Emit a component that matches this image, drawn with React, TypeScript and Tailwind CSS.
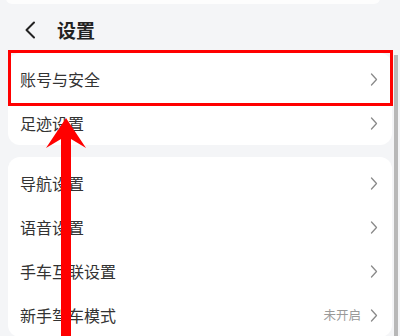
import React from "react";

function Chevron() {
  return (
    <svg width="8" height="13" viewBox="0 0 8 13" className="shrink-0">
      <path d="M1.5 1 L6.5 6.5 L1.5 12" fill="none" stroke="#8a8a8a" strokeWidth="1.3" strokeLinecap="round" strokeLinejoin="round" />
    </svg>
  );
}

function Row({ label, value }: { label: string; value?: string }) {
  return (
    <div className="h-[44px] flex items-center justify-between pl-[12px] pr-[14px]">
      <span className="text-[16px] text-[#333333] leading-none">{label}</span>
      <div className="flex items-center gap-[9px]">
        {value && <span className="text-[12.5px] text-[#9a9a9a] leading-none">{value}</span>}
        <Chevron />
      </div>
    </div>
  );
}

export default function App() {
  return (
    <div
      className="relative w-[400px] h-[336px] overflow-hidden bg-[#f4f5f7]"
      style={{ fontFamily: '"Noto Sans CJK SC", "Noto Sans", sans-serif' }}
    >
      <div className="absolute left-[6px] right-[20px] top-[-8px] h-[12px] rounded-[10px] bg-white/80" />
      <div className="h-[53px] flex items-center pl-[24px] pt-[6px]">
        <svg width="12" height="18" viewBox="0 0 12 18">
          <path d="M10 1.5 L2.5 9 L10 16.5" fill="none" stroke="#222" strokeWidth="2" strokeLinecap="round" strokeLinejoin="round" />
        </svg>
        <span className="ml-[21px] text-[19px] font-bold text-[#222] leading-none">设置</span>
      </div>
      <div className="mx-[8px] w-[384px] flex flex-col gap-[12px]">
        <div className="bg-white rounded-[12px] pt-[4px]">
          <Row label="账号与安全" />
          <Row label="足迹设置" />
        </div>
        <div className="bg-white rounded-[12px] pt-[4px]">
          <Row label="导航设置" />
          <Row label="语音设置" />
          <Row label="手车互联设置" />
          <Row label="新手驾车模式" value="未开启" />
        </div>
      </div>
      <div className="absolute left-[394px] top-[55px] w-[4px] h-[290px] bg-[#b8b8b8]" />
      <div className="absolute left-[8px] top-[50px] w-[385px] h-[56px] border-[3px] border-[#ff0000]" />
      <svg className="absolute left-0 top-0" width="400" height="336" viewBox="0 0 400 336">
        <polygon points="66,118 86,148 71,139 71,340 61,340 61,139 46,148" fill="#ff0000" />
      </svg>
    </div>
  );
}
